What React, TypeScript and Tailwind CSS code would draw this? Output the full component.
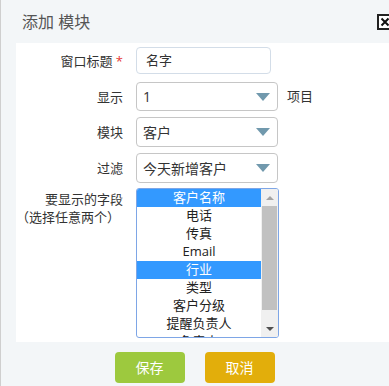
import React from 'react';

const font = { fontFamily: '"Open Sans", "Noto Sans CJK SC", sans-serif' };

// fake select box, native <select> renders differently per browser
const SelectBox = ({ value, className }: { value: string; className?: string }) => (
  <div
    className={`relative flex items-center w-[142px] rounded-[4px] border border-[#c6c6c6] bg-white pl-[6px] text-[14px] text-[#333] ${className ?? ''}`}
  >
    <span>{value}</span>
    <span className="absolute right-[7px] top-1/2 -translate-y-1/2 w-0 h-0 border-l-[7px] border-r-[7px] border-t-[8px] border-l-transparent border-r-transparent border-t-[#7199ad]" />
  </div>
);

const Label = ({ children }: { children: React.ReactNode }) => (
  <div className="w-[107px] text-right text-[13px] text-[#333] leading-[18px]">{children}</div>
);

const fields = ['客户名称', '电话', '传真', 'Email', '行业', '类型', '客户分级', '提醒负责人', '负责人'];
const selected = ['客户名称', '行业'];

export default function App() {
  return (
    <div className="w-[389px] h-[386px] overflow-hidden bg-[#f3f6f8] border-l border-[#cfcfcf] flex flex-col" style={font}>
      <div className="h-[43px] shrink-0 flex items-center justify-between pl-[21px]">
        <span className="text-[16px] text-[#555]">添加 模块</span>
        <div className="w-[16px] h-[16px] mr-[-4px] border-2 border-[#222] bg-white flex items-center justify-center">
          <svg width="10" height="10" viewBox="0 0 10 10">
            <path d="M1.5 1.5 L8.5 8.5 M8.5 1.5 L1.5 8.5" stroke="#111" strokeWidth="2" />
          </svg>
        </div>
      </div>

      <div className="flex-1 ml-[15px] bg-white pt-[4px] flex flex-col">
        <div className="flex items-center gap-[13px]">
          <Label>
            窗口标题 <span className="text-[#e53935]">*</span>
          </Label>
          <div className="w-[135px] h-[27px] rounded-[4px] border border-[#d3dde8] flex items-center pl-[9px] text-[13px] text-[#333]">
            名字
          </div>
        </div>

        <div className="flex items-center gap-[13px] mt-[8px]">
          <Label>显示</Label>
          <SelectBox value="1" className="h-[29px]" />
          <span className="text-[13px] text-[#333] -ml-[4px]">项目</span>
        </div>

        <div className="flex items-center gap-[13px] mt-[6px]">
          <Label>模块</Label>
          <SelectBox value="客户" className="h-[30px] text-[13px]" />
        </div>

        <div className="flex items-center gap-[13px] mt-[6px]">
          <Label>过滤</Label>
          <SelectBox value="今天新增客户" className="h-[30px] text-[13px]" />
        </div>

        <div className="flex items-start gap-[13px] mt-[5px]">
          <div className="w-[107px] flex flex-col items-end text-[13px] text-[#333] leading-[18px] pt-[2px]">
            <span>要显示的字段</span>
            <span className="whitespace-nowrap mr-[3px]" style={{ fontFamily: '"Noto Sans CJK SC", sans-serif' }}>
              （选择任意两个）
            </span>
          </div>
          <div className="w-[143px] h-[150px] rounded-[3px] border border-[#7ea6e6] flex overflow-hidden">
            <div className="flex-1 flex flex-col overflow-hidden">
              {fields.map((f) => (
                <div
                  key={f}
                  className={`h-[18px] shrink-0 flex items-center justify-center text-[13px] ${
                    selected.includes(f) ? 'bg-[#3399ff] text-white' : 'text-[#222]'
                  }`}
                >
                  {f}
                </div>
              ))}
            </div>
            <div className="w-[17px] bg-[#f0f0f0] flex flex-col items-center">
              <div className="h-[17px] flex items-center justify-center">
                <span className="w-0 h-0 border-l-[4px] border-r-[4px] border-b-[4px] border-l-transparent border-r-transparent border-b-[#a3a3a3]" />
              </div>
              <div className="w-[15px] h-[104px] bg-[#c1c1c1]" />
              <div className="flex-1" />
              <div className="h-[17px] flex items-center justify-center">
                <span className="w-0 h-0 border-l-[4px] border-r-[4px] border-t-[4px] border-l-transparent border-r-transparent border-t-[#505050]" />
              </div>
            </div>
          </div>
        </div>
      </div>

      <div className="h-[44px] shrink-0 flex items-start justify-center gap-[20px] pt-[10px] -ml-[1px]">
        <button className="w-[70px] h-[31px] rounded-[4px] bg-[#9dc93e] text-white text-[14px]">保存</button>
        <button className="w-[70px] h-[31px] rounded-[4px] bg-[#e2ae0b] text-white text-[14px]">取消</button>
      </div>
    </div>
  );
}
